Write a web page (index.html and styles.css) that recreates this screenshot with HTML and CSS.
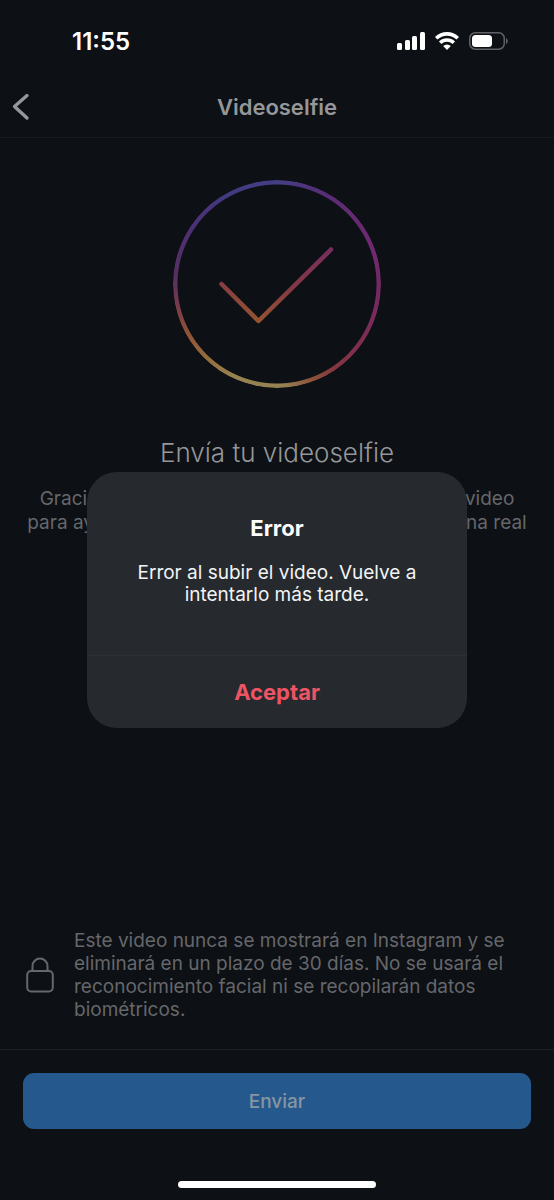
FILE: index.html
```html
<!DOCTYPE html>
<html lang="es">
<head>
<meta charset="utf-8">
<meta name="viewport" content="width=device-width, initial-scale=1">
<title>Videoselfie</title>
<link rel="stylesheet" href="styles.css">
</head>
<body>
<div class="screen">
  <div class="status-bar">
    <span class="time">11:55</span>
    <div class="status-icons">
      <svg width="28" height="18" viewBox="0 0 28 18" fill="#fff" aria-hidden="true">
        <rect x="0" y="11" width="5" height="7" rx="1.5"/>
        <rect x="8" y="8" width="5" height="10" rx="1.5"/>
        <rect x="15" y="4" width="5" height="14" rx="1.5"/>
        <rect x="23" y="0" width="5" height="18" rx="1.5"/>
      </svg>
      <svg width="24" height="18" viewBox="0 0 24 18" fill="none" stroke="#fff" stroke-width="3.6" aria-hidden="true">
        <path d="M1.2 6.3a15.4 15.4 0 0 1 21.6 0"/>
        <path d="M5.2 10.8a9.7 9.7 0 0 1 13.6 0"/>
        <path d="M12 18l-3.8-4a5.4 5.4 0 0 1 7.6 0z" fill="#fff" stroke="none"/>
      </svg>
      <svg width="39" height="18" viewBox="0 0 39 18" fill="none" aria-hidden="true">
        <rect x=".75" y=".75" width="34.5" height="16.5" rx="5.5" stroke="#5f6164" stroke-width="1.5"/>
        <rect x="3" y="3" width="20" height="12" rx="3.5" fill="#fff"/>
        <path d="M37 6c2.4 1 2.4 5 0 6z" fill="#5f6164"/>
      </svg>
    </div>
  </div>

  <header class="nav">
    <button class="back" type="button" aria-label="Atrás">
      <svg width="18" height="28" viewBox="0 0 18 28" fill="none" stroke="#95979a" stroke-width="3.4" stroke-linecap="round" stroke-linejoin="round" aria-hidden="true">
        <path d="M15 2.500L2.500 13.500l12.500 11.500"/>
      </svg>
    </button>
    <h1 class="nav-title">Videoselfie</h1>
  </header>

  <main class="content">
    <div class="badge-ring">
      <div class="ring"></div>
      <svg class="check" viewBox="0 0 208 208" fill="none" aria-hidden="true">
        <defs>
          <linearGradient id="check-stroke" gradientUnits="userSpaceOnUse" x1="85" y1="145" x2="97" y2="60">
            <stop offset="0" stop-color="#96562f"/>
            <stop offset=".5" stop-color="#823845"/>
            <stop offset="1" stop-color="#792d61"/>
          </linearGradient>
        </defs>
        <path d="M48.500 104L85.500 141L158 69.500" stroke="url(#check-stroke)" stroke-width="4.500" stroke-linecap="round" stroke-linejoin="round"/>
      </svg>
    </div>
    <h2 class="headline">Envía tu videoselfie</h2>
    <p class="lead">Gracias por tomarte el tiempo para grabar este video<br>para ayudarnos a comprobar que eres una persona real</p>
    <div class="privacy">
      <svg class="lock" width="28" height="36" viewBox="0 0 28 36" fill="none" stroke="#65676b" stroke-width="2" aria-hidden="true">
        <rect x="1.200" y="14" width="25.600" height="20.500" rx="4"/>
        <path d="M6.500 14V9a7.500 7.500 0 0 1 15 0v5"/>
      </svg>
      <p class="privacy-text">Este video nunca se mostrará en Instagram y se eliminará en un plazo de 30 días. No se usará el reconocimiento facial ni se recopilarán datos biométricos.</p>
    </div>
  </main>

  <footer class="actions">
    <button class="send" type="button">Enviar</button>
    <div class="home-indicator"></div>
  </footer>

  <div class="overlay">
    <div class="dialog" role="alertdialog" aria-modal="true" aria-labelledby="dialog-title" aria-describedby="dialog-text">
      <div class="dialog-body">
        <h2 class="dialog-title" id="dialog-title">Error</h2>
        <p class="dialog-text" id="dialog-text">Error al subir el video. Vuelve a intentarlo más tarde.</p>
      </div>
      <button class="accept" type="button">Aceptar</button>
    </div>
  </div>
</div>
</body>
</html>
```
FILE: styles.css
```css
* {
  box-sizing: border-box;
}

body,
h1,
h2,
p {
  margin: 0;
}

body {
  background: #0d1014;
  color: #65676b;
  font-family: Inter, "Liberation Sans", sans-serif;
}

button {
  border: 0;
  padding: 0;
  background: none;
  font-family: inherit;
  cursor: pointer;
}

svg {
  display: block;
}

.screen {
  position: relative;
  display: flex;
  flex-direction: column;
  min-height: 100vh;
}

.status-bar {
  display: flex;
  align-items: center;
  justify-content: space-between;
  height: 76px;
  padding: 6px 46px 0 72px;
}

.time {
  color: #fff;
  font-size: 24px;
  font-weight: 600;
}

.status-icons {
  display: flex;
  gap: 10px;
}

.nav {
  display: grid;
  grid-template-columns: 48px 1fr 48px;
  align-items: center;
  height: 62px;
  border-bottom: 1px solid #171a1e;
}

.back {
  display: flex;
  align-items: center;
  height: 100%;
  padding-left: 12px;
}

.nav-title {
  color: #95979a;
  font-size: 22px;
  font-weight: 600;
  line-height: 28px;
  text-align: center;
}

.content {
  display: flex;
  flex: 1;
  flex-direction: column;
  align-items: center;
  padding: 42px 22px 28px;
}

.badge-ring {
  display: grid;
  width: 208px;
  height: 208px;
}

.ring,
.check {
  grid-area: 1 / 1;
}

.ring {
  border-radius: 50%;
  background: conic-gradient(#433f85, #582c75 30deg, #6e2970 65deg, #752965 95deg, #7e2d50 125deg, #823640 145deg, #8d4d3a 158deg, #968153 176deg, #968350 205deg, #946f3e 222deg, #8f5137 242deg, #753a4a 258deg, #572f62 275deg, #4c3075 305deg, #43397f 330deg, #433f85);
  -webkit-mask: radial-gradient(closest-side, transparent 99px, #000 100px);
  mask: radial-gradient(closest-side, transparent 99px, #000 100px);
}

.headline {
  margin-top: 48px;
  color: #95979a;
  font-size: 26px;
  font-weight: 300;
  line-height: 34px;
  text-align: center;
}

.lead {
  margin-top: 17px;
  font-size: 19px;
  line-height: 24px;
  text-align: center;
  white-space: nowrap;
}

.privacy {
  display: flex;
  align-items: center;
  gap: 20px;
  width: 100%;
  margin-top: auto;
  padding: 0 4px;
}

.lock {
  flex: none;
}

.privacy-text {
  font-size: 19px;
  line-height: 23px;
}

.actions {
  display: flex;
  flex-direction: column;
  align-items: center;
  padding: 23px 23px 12px;
  border-top: 1px solid #1d2024;
}

.send {
  width: 100%;
  height: 56px;
  border-radius: 11px;
  background: #25588d;
  color: #8796a0;
  font-size: 19px;
  font-weight: 500;
}

.home-indicator {
  width: 198px;
  height: 7px;
  margin-top: 52px;
  border-radius: 4px;
  background: #fff;
}

.overlay {
  position: absolute;
  inset: 0;
  display: flex;
  align-items: center;
  justify-content: center;
  padding: 24px;
}

.dialog {
  width: 100%;
  max-width: 380px;
  overflow: hidden;
  border-radius: 30px;
  background: #26292d;
  text-align: center;
}

.dialog-body {
  padding: 42px 40px 49px;
}

.dialog-title {
  color: #fff;
  font-size: 22px;
  font-weight: 700;
  line-height: 28px;
}

.dialog-text {
  margin-top: 20px;
  color: #f3f4f5;
  font-size: 19px;
  line-height: 22px;
}

.accept {
  width: 100%;
  height: 73px;
  border-top: 1px solid #2d3034;
  color: #ed5565;
  font-size: 22px;
  font-weight: 700;
}
```
